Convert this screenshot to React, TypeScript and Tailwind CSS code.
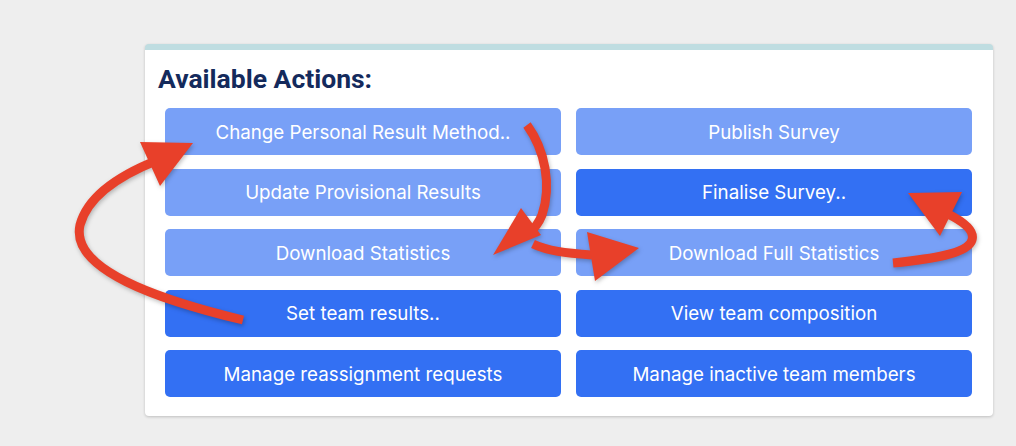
const actions: { label: string; dark?: boolean }[] = [
  { label: "Change Personal Result Method.." },
  { label: "Publish Survey" },
  { label: "Update Provisional Results" },
  { label: "Finalise Survey..", dark: true },
  { label: "Download Statistics" },
  { label: "Download Full Statistics" },
  { label: "Set team results..", dark: true },
  { label: "View team composition", dark: true },
  { label: "Manage reassignment requests", dark: true },
  { label: "Manage inactive team members", dark: true },
];

function Arrows() {
  const red = "#e8402a";
  return (
    <svg
      className="absolute left-0 top-0 pointer-events-none"
      width="1016"
      height="446"
      viewBox="0 0 1016 446"
      fill="none"
      style={{ filter: "drop-shadow(1px 2px 2px rgba(0,0,0,0.25))" }}
    >
      {/* left loop up to first button */}
      <path d="M243 320 C 160 300, 70 270, 80 225 C 88 195, 120 175, 158 160" stroke={red} strokeWidth="9" strokeLinecap="butt" />
      <polygon points="193,143 140,142 160,186" fill={red} />
      {/* down from first button */}
      <path d="M527 125 C 545 150, 552 185, 542 215 C 538 225, 533 230, 528 234" stroke={red} strokeWidth="9" />
      <polygon points="493,255 521,208 541,235" fill={red} />
      {/* across to full statistics */}
      <path d="M533 244 C 548 251, 565 253, 592 255" stroke={red} strokeWidth="9" />
      <polygon points="639,248 587,232 595,281" fill={red} />
      {/* hook up to finalise */}
      <path d="M893 263 C 930 259, 968 254, 972 240 C 975 230, 962 221, 948 214" stroke={red} strokeWidth="9" />
      <polygon points="908,193 962,192 940,236" fill={red} />
    </svg>
  );
}

export default function App() {
  return (
    <div className="relative w-[1016px] h-[446px] bg-[#eeeeee] overflow-hidden font-['Inter',sans-serif]">
      <div className="pl-[145px] pr-[23px] pt-[44px]">
        <div className="bg-white rounded-[4px] border-t-[6px] border-[#bfdde1] shadow-[0_1px_3px_rgba(0,0,0,0.2)] pl-[13px] pr-[21px] pt-[12px] pb-[19px]">
          <h2 className="font-['Roboto',sans-serif] font-bold text-[26.5px] leading-[34px] text-[#142a5c] mb-[12px]">
            Available Actions:
          </h2>
          <div className="grid grid-cols-2 gap-x-[15px] gap-y-[13.5px] pl-[7px]">
            {actions.map((a) => (
              <button
                key={a.label}
                className={`h-[47px] pt-[3px] rounded-[5px] text-white text-[18.75px] flex items-center justify-center ${a.dark ? "bg-[#3370f3]" : "bg-[#78a0f7]"}`}
              >
                {a.label}
              </button>
            ))}
          </div>
        </div>
      </div>
      <Arrows />
    </div>
  );
}
